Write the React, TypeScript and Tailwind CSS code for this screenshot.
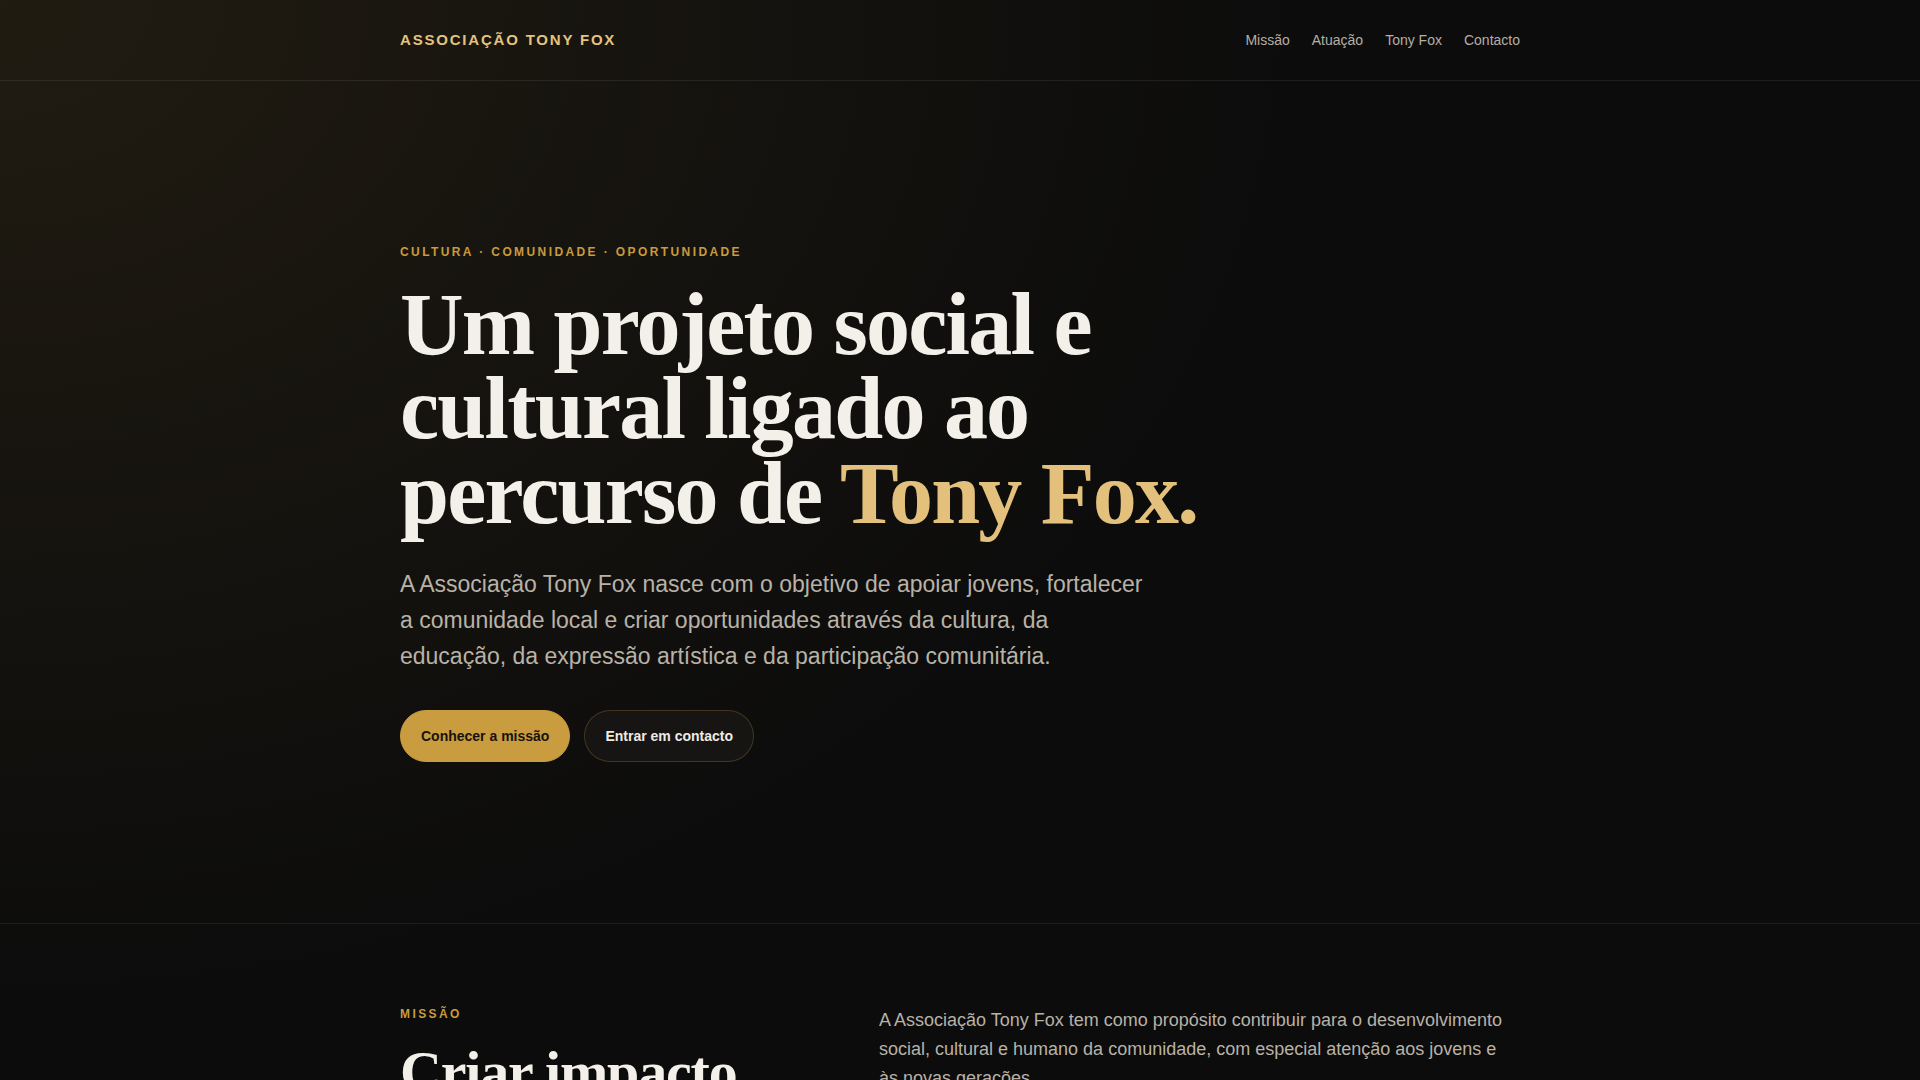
export default function App() {
  const links = ["Missão", "Atuação", "Tony Fox", "Contacto"];
  return (
    <div className="min-h-screen bg-[#0c0c0c] bg-[radial-gradient(ellipse_1300px_1000px_at_0%_0%,rgba(201,157,62,0.11),transparent)] font-['Liberation_Sans',Arial,sans-serif] text-[#f2efe8]">
      <header className="border-b border-white/[0.08]">
        <div className="mx-auto flex h-20 max-w-[1120px] items-center justify-between">
          <a className="text-[15px] font-bold tracking-[0.12em] text-[#e4c27e]">ASSOCIAÇÃO TONY FOX</a>
          <nav className="flex items-center gap-[22px] text-[14px] text-[#b5afa4]">
            {links.map((l) => (
              <a key={l}>{l}</a>
            ))}
          </nav>
        </div>
      </header>

      <section className="border-b border-white/[0.08]">
        <div className="mx-auto max-w-[1120px] pb-[161px] pt-[163px]">
          <p className="text-xs font-bold leading-4 tracking-[0.2em] text-[#c99b3b]">
            CULTURA · COMUNIDADE · OPORTUNIDADE
          </p>
          <h1 className="mt-[23px] max-w-[880px] font-['Liberation_Serif','Times_New_Roman',serif] text-[88px] font-bold leading-[0.96] tracking-[-0.02em] text-[#f3f0e9]">
            Um projeto social e cultural ligado ao percurso de{" "}
            <span className="text-[#e3c07b]">Tony Fox.</span>
          </h1>
          <p className="mt-[30px] max-w-[760px] text-[23px] leading-[36px] text-[#b8b2a7]">
            A Associação Tony Fox nasce com o objetivo de apoiar jovens, fortalecer a comunidade local e criar
            oportunidades através da cultura, da educação, da expressão artística e da participação comunitária.
          </p>
          <div className="mt-9 flex gap-3.5">
            <a className="flex h-[52px] items-center rounded-full border border-[#c99c3f] bg-[#c99c3f] px-5 text-sm font-bold text-[#17130c]">
              Conhecer a missão
            </a>
            <a className="flex h-[52px] items-center rounded-full border border-[#c99c3f]/25 bg-[#161514] px-5 text-sm font-bold text-[#efebe3]">
              Entrar em contacto
            </a>
          </div>
        </div>
      </section>

      <section>
        <div className="mx-auto grid max-w-[1120px] grid-cols-[415px_1fr] gap-16 pb-24 pt-[82px]">
          <div>
            <p className="text-xs font-bold leading-4 tracking-[0.2em] text-[#c99b3b]">MISSÃO</p>
            <h2 className="mt-5 font-['Liberation_Serif','Times_New_Roman',serif] text-[58px] font-bold leading-[1.05] tracking-[-0.02em] text-[#f3f0e9]">
              Criar impacto real na comunidade.
            </h2>
          </div>
          <div className="flex flex-col gap-5 text-[18px] leading-[29px] text-[#b8b2a7]">
            <p>
              A Associação Tony Fox tem como propósito contribuir para o desenvolvimento social, cultural e humano da
              comunidade, com especial atenção aos jovens e às novas gerações.
            </p>
            <p>
              Através de iniciativas culturais, educativas e comunitárias, procuramos criar espaços de encontro,
              aprendizagem e partilha.
            </p>
          </div>
        </div>
      </section>
    </div>
  );
}
